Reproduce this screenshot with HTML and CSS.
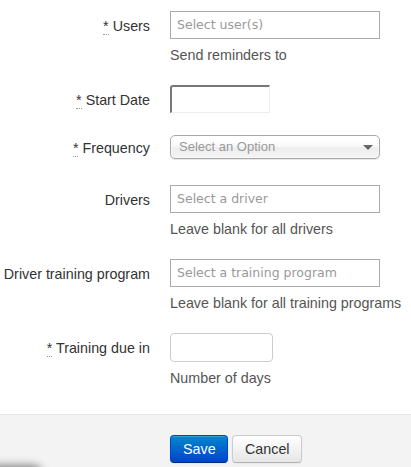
FILE: index.html
```html
<!DOCTYPE html>
<html>
<head>
<meta charset="utf-8">
<link rel="stylesheet" href="styles.css">
</head>
<body>
<form class="form">
  <div class="group g-users">
    <label class="label"><abbr title="required">*</abbr> Users</label>
    <div class="controls">
      <div class="text-field wide"><span class="ph">Select user(s)</span></div>
      <p class="help">Send reminders to</p>
    </div>
  </div>
  <div class="group g-date">
    <label class="label"><abbr title="required">*</abbr> Start Date</label>
    <div class="controls">
      <div class="date-field"></div>
    </div>
  </div>
  <div class="group g-freq">
    <label class="label"><abbr title="required">*</abbr> Frequency</label>
    <div class="controls">
      <div class="select"><span class="select-text">Select an Option</span><span class="arrow"></span></div>
    </div>
  </div>
  <div class="group g-drivers">
    <label class="label">Drivers</label>
    <div class="controls">
      <div class="text-field wide"><span class="ph">Select a driver</span></div>
      <p class="help">Leave blank for all drivers</p>
    </div>
  </div>
  <div class="group g-program">
    <label class="label">Driver training program</label>
    <div class="controls">
      <div class="text-field wide"><span class="ph">Select a training program</span></div>
      <p class="help">Leave blank for all training programs</p>
    </div>
  </div>
  <div class="group g-due">
    <label class="label"><abbr title="required">*</abbr> Training due in</label>
    <div class="controls">
      <div class="num-field"></div>
      <p class="help">Number of days</p>
    </div>
  </div>
  <div class="actions">
    <button type="button" class="btn btn-primary">Save</button>
    <button type="button" class="btn">Cancel</button>
  </div>
</form>
<div class="corner-shadow"></div>
</body>
</html>
```

FILE: styles.css
```css
html, body {
  margin: 0;
  padding: 0;
  background: #fff;
  height: 100%;
  overflow: hidden;
}
body {
  font-family: "Liberation Sans", Arial, sans-serif;
  font-size: 14.3px;
  line-height: 20px;
  color: #333;
  position: relative;
}
.form {
  padding-top: 11px;
  min-height: 456px;
  display: flex;
  flex-direction: column;
}
.group {
  display: flex;
  align-items: flex-start;
}
.g-users { margin-bottom: 19px; }
.g-date { margin-bottom: 20px; }
.g-freq { margin-bottom: 24px; }
.g-drivers { margin-bottom: 19px; }
.g-program { margin-bottom: 19px; }
.g-due { margin-bottom: 25px; }
.label {
  box-sizing: border-box;
  width: 150px;
  height: 28px;
  text-align: right;
  line-height: 28px;
  padding-top: 1px;
  margin-right: 20px;
  flex-shrink: 0;
  white-space: nowrap;
}
abbr {
  text-decoration: none;
  border-bottom: 1px dotted #999;
  cursor: help;
}
.controls {
  display: flex;
  flex-direction: column;
  align-items: flex-start;
}
.text-field {
  box-sizing: border-box;
  height: 28px;
  border: 1px solid #aaa;
  background: #fff;
  padding: 0 6px;
  display: flex;
  align-items: center;
}
.wide { width: 210px; }
.ph {
  font-family: "DejaVu Sans", sans-serif;
  font-size: 12.5px;
  color: #999;
}
.help {
  margin: 5px 0 0;
  line-height: 22px;
  color: #555;
}
.date-field {
  box-sizing: border-box;
  width: 100px;
  height: 28px;
  border-style: solid;
  border-width: 2px 1px 1px 2px;
  border-color: #777 #eee #eee #777;
  border-radius: 3px 0 0 0;
  background: #fff;
}
.select {
  box-sizing: border-box;
  width: 210px;
  height: 24px;
  margin: 2px 0;
  border: 1px solid #aaa;
  border-radius: 5px;
  background: linear-gradient(to bottom, #fff 20%, #f6f6f6 50%, #eee 52%, #f4f4f4 100%);
  box-shadow: 0 0 3px #fff inset, 0 1px 1px rgba(0,0,0,0.1);
  display: flex;
  align-items: center;
  justify-content: space-between;
  padding: 0 6px 0 8px;
}
.select-text {
  font-family: "Liberation Sans", Arial, sans-serif;
  font-size: 13px;
  color: #999;
}
.arrow {
  width: 0;
  height: 0;
  border-left: 5px solid transparent;
  border-right: 5px solid transparent;
  border-top: 5px solid #666;
  margin-top: 1px;
}
.num-field {
  box-sizing: border-box;
  width: 103px;
  height: 29px;
  border: 1px solid #ccc;
  border-radius: 4px;
  background: #fff;
}
.actions {
  flex: 1;
  border-top: 1px solid #e5e5e5;
  background: #f3f3f3;
  padding: 20px 0 0 170px;
  display: flex;
  align-items: flex-start;
  gap: 4px;
}
.btn {
  box-sizing: border-box;
  height: 28px;
  padding: 0 12px;
  font-family: "Liberation Sans", Arial, sans-serif;
  font-size: 14.3px;
  line-height: 26px;
  color: #333;
  border: 1px solid #ccc;
  border-bottom-color: #b3b3b3;
  border-radius: 4px;
  background: linear-gradient(to bottom, #fff, #e6e6e6);
  box-shadow: inset 0 1px 0 rgba(255,255,255,.2), 0 1px 2px rgba(0,0,0,.05);
  cursor: pointer;
}
.btn-primary {
  color: #fff;
  width: 58px;
  border-color: #0044cc #0044cc #002a80;
  background: linear-gradient(to bottom, #0088cc, #0044cc);
}
.btn:not(.btn-primary) { width: 70px; }
.corner-shadow {
  position: absolute;
  left: -10px;
  top: 469px;
  width: 48px;
  height: 10px;
  border-radius: 8px;
  box-shadow: 0 0 8px 4px rgba(0,0,0,0.45);
}
```
